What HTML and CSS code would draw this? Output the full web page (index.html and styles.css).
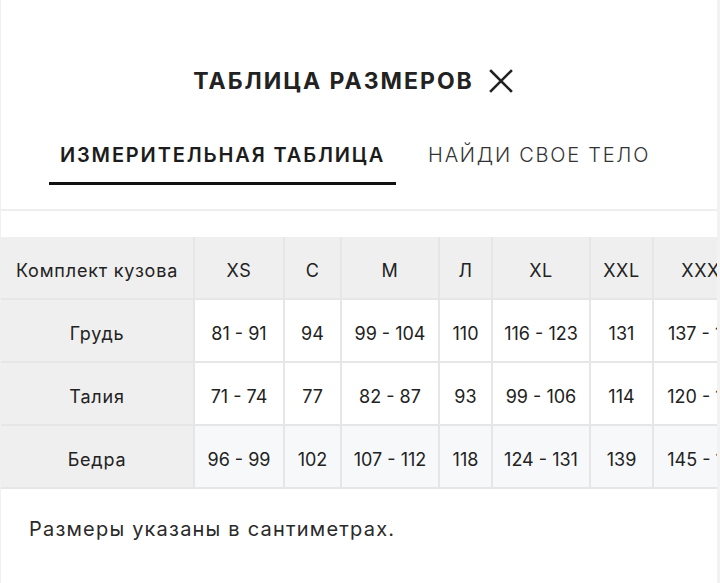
FILE: index.html
```html
<!DOCTYPE html>
<html lang="ru">
<head>
<meta charset="utf-8">
<link rel="stylesheet" href="styles.css">
</head>
<body>
<div class="modal">
  <header class="title-bar">
    <h1 class="title">ТАБЛИЦА РАЗМЕРОВ</h1>
    <svg class="close" viewBox="0 0 24 24" width="24" height="24"><path d="M2 2 L22 22 M22 2 L2 22" stroke="#222" stroke-width="2.6" fill="none" stroke-linecap="square"/></svg>
  </header>
  <nav class="tabs">
    <div class="tab active">ИЗМЕРИТЕЛЬНАЯ ТАБЛИЦА</div>
    <div class="tab">НАЙДИ СВОЕ ТЕЛО</div>
  </nav>
  <div class="divider"></div>
  <div class="table-wrap">
    <table class="sizes">
      <colgroup>
        <col class="c0"><col class="c1"><col class="c2"><col class="c3"><col class="c4"><col class="c5"><col class="c6"><col class="c7">
      </colgroup>
      <tr class="head">
        <th>Комплект кузова</th><td>XS</td><td>C</td><td>M</td><td>Л</td><td>XL</td><td>XXL</td><td>XXXL</td>
      </tr>
      <tr>
        <th>Грудь</th><td>81 - 91</td><td>94</td><td>99 - 104</td><td>110</td><td>116 - 123</td><td>131</td><td>137 - 147</td>
      </tr>
      <tr>
        <th>Талия</th><td>71 - 74</td><td>77</td><td>82 - 87</td><td>93</td><td>99 - 106</td><td>114</td><td>120 - 126</td>
      </tr>
      <tr class="alt">
        <th>Бедра</th><td>96 - 99</td><td>102</td><td>107 - 112</td><td>118</td><td>124 - 131</td><td>139</td><td>145 - 155</td>
      </tr>
    </table>
  </div>
  <p class="note">Размеры указаны в сантиметрах.</p>
</div>
</body>
</html>
```

FILE: styles.css
```css
html, body {
  margin: 0;
  padding: 0;
  background: #fff;
}
body {
  font-family: "Inter", "Open Sans", sans-serif;
  color: #222;
  width: 720px;
  height: 583px;
  overflow: hidden;
}
.modal {
  position: relative;
  height: 583px;
  border-left: 1px solid #f0f0f0;
  border-right: 3px solid #f2f2f2;
  box-sizing: border-box;
  overflow: hidden;
}
.title-bar {
  display: flex;
  justify-content: center;
  align-items: center;
  gap: 15px;
  padding-top: 66px;
  height: 30px;
  padding-right: 12px;
}
.title {
  margin: 0;
  font-size: 23px;
  font-weight: 700;
  letter-spacing: 2px;
  color: #222;
}
.close {
  display: block;
}
.tabs {
  display: flex;
  margin-top: 42px;
  padding-left: 48px;
  gap: 32px;
  height: 47px;
}
.tab {
  font-size: 20px;
  font-weight: 300;
  color: #333;
  padding: 5px 0 0;
  box-sizing: border-box;
  height: 47px;
  letter-spacing: 1.75px;
}
.tab.active {
  font-weight: 600;
  color: #1c1c1c;
  border-bottom: 3px solid #111;
  padding-left: 11px;
  padding-right: 11px;
  letter-spacing: 1.85px;
}
.divider {
  margin-top: 24px;
  height: 2px;
  background: #eeeeee;
}
.table-wrap {
  margin-top: 26px;
  width: 720px;
  overflow: hidden;
}
.sizes {
  border-collapse: collapse;
  table-layout: fixed;
  width: 758px;
  font-size: 18px;
  font-weight: 400;
}
.c0 { width: 193px; }
.c1 { width: 90px; }
.c2 { width: 57px; }
.c3 { width: 98px; }
.c4 { width: 53px; }
.c5 { width: 98px; }
.c6 { width: 63px; }
.c7 { width: 106px; }
.sizes th, .sizes td {
  height: 56px;
  padding: 5px 0 0;
  text-align: center;
  white-space: nowrap;
  border: 2px solid #e6e6e6;
  font-weight: 400;
  color: #222;
}
.sizes th {
  background: #efefef;
  letter-spacing: 0.8px;
}
.sizes tr.head td {
  background: #efefef;
  letter-spacing: 0.6px;
}
.sizes td {
  background: #fff;
}
.sizes tr.alt td {
  background: #f7f8fa;
}
.sizes tr:first-child th, .sizes tr:first-child td {
  border-top: none;
}
.sizes th {
  border-left: none;
}
.note {
  margin: 28px 0 0 28px;
  font-size: 20px;
  letter-spacing: 1.2px;
  color: #2a2a2a;
}
```
